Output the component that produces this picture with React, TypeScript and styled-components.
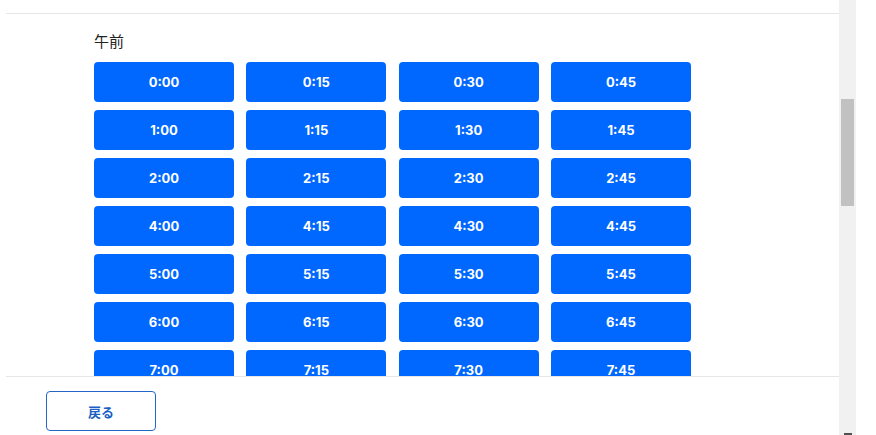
import React from "react";
import styled, { createGlobalStyle } from "styled-components";

const Global = createGlobalStyle`
  html, body { margin: 0; padding: 0; background: #fff; }
  body { font-family: Inter, "Noto Sans CJK JP", sans-serif; }
`;

const Page = styled.div`
  display: flex;
  width: 876px;
  height: 435px;
  overflow: hidden;
  background: #fff;
`;

const Main = styled.div`
  width: 839px;
  display: flex;
  flex-direction: column;
  height: 435px;
`;

const HeaderEdge = styled.div`
  height: 13px;
  margin-left: 6px;
  border-bottom: 1px solid #e6e6e6;
  flex: none;
`;

const Body = styled.div`
  flex: 1;
  overflow: hidden;
  padding: 17px 0 0 94px;
`;

const SectionLabel = styled.div`
  font-family: "Noto Sans CJK JP", sans-serif;
  font-size: 15px;
  line-height: 20px;
  color: #222;
  margin-bottom: 11px;
`;

const Grid = styled.div`
  display: grid;
  width: 597px;
  grid-template-columns: repeat(4, 1fr);
  column-gap: 12.33px;
  row-gap: 8px;
`;

const TimeButton = styled.button`
  height: 40px;
  border: none;
  border-radius: 4px;
  background: #0068ff;
  color: #fff;
  font-family: Inter, sans-serif;
  font-weight: 700;
  font-size: 13px;
  padding: 0;
  cursor: pointer;
`;

const Footer = styled.div`
  flex: none;
  margin-left: 6px;
  border-top: 1px solid #e6e6e6;
  height: 59px;
  padding: 14px 0 0 40px;
  box-sizing: border-box;
`;

const BackButton = styled.button`
  width: 110px;
  height: 40px;
  border: 1px solid #2466c6;
  border-radius: 4px;
  background: #fff;
  color: #1b5fc4;
  font-family: "Noto Sans CJK JP", sans-serif;
  font-weight: 700;
  font-size: 13px;
  padding: 0;
  cursor: pointer;
`;

const ScrollTrack = styled.div`
  width: 17px;
  height: 435px;
  background: #f1f1f1;
  display: flex;
  flex-direction: column;
  align-items: center;
  flex: none;
`;

const Thumb = styled.div`
  width: 13px;
  height: 107px;
  margin-top: 99px;
  background: #c1c1c1;
`;

const ArrowTip = styled.div`
  margin-top: auto;
  width: 8px;
  height: 2px;
  background: #505050;
`;

const hours = [0, 1, 2, 4, 5, 6, 7];
const mins = ["00", "15", "30", "45"];

export default function App() {
  return (
    <>
      <Global />
      <Page>
        <Main>
          <HeaderEdge />
          <Body>
            <SectionLabel>午前</SectionLabel>
            <Grid>
              {hours.flatMap((h) =>
                mins.map((m) => (
                  <TimeButton key={`${h}:${m}`}>{`${h}:${m}`}</TimeButton>
                ))
              )}
            </Grid>
          </Body>
          <Footer>
            <BackButton>戻る</BackButton>
          </Footer>
        </Main>
        <ScrollTrack>
          <Thumb />
          <ArrowTip />
        </ScrollTrack>
      </Page>
    </>
  );
}
